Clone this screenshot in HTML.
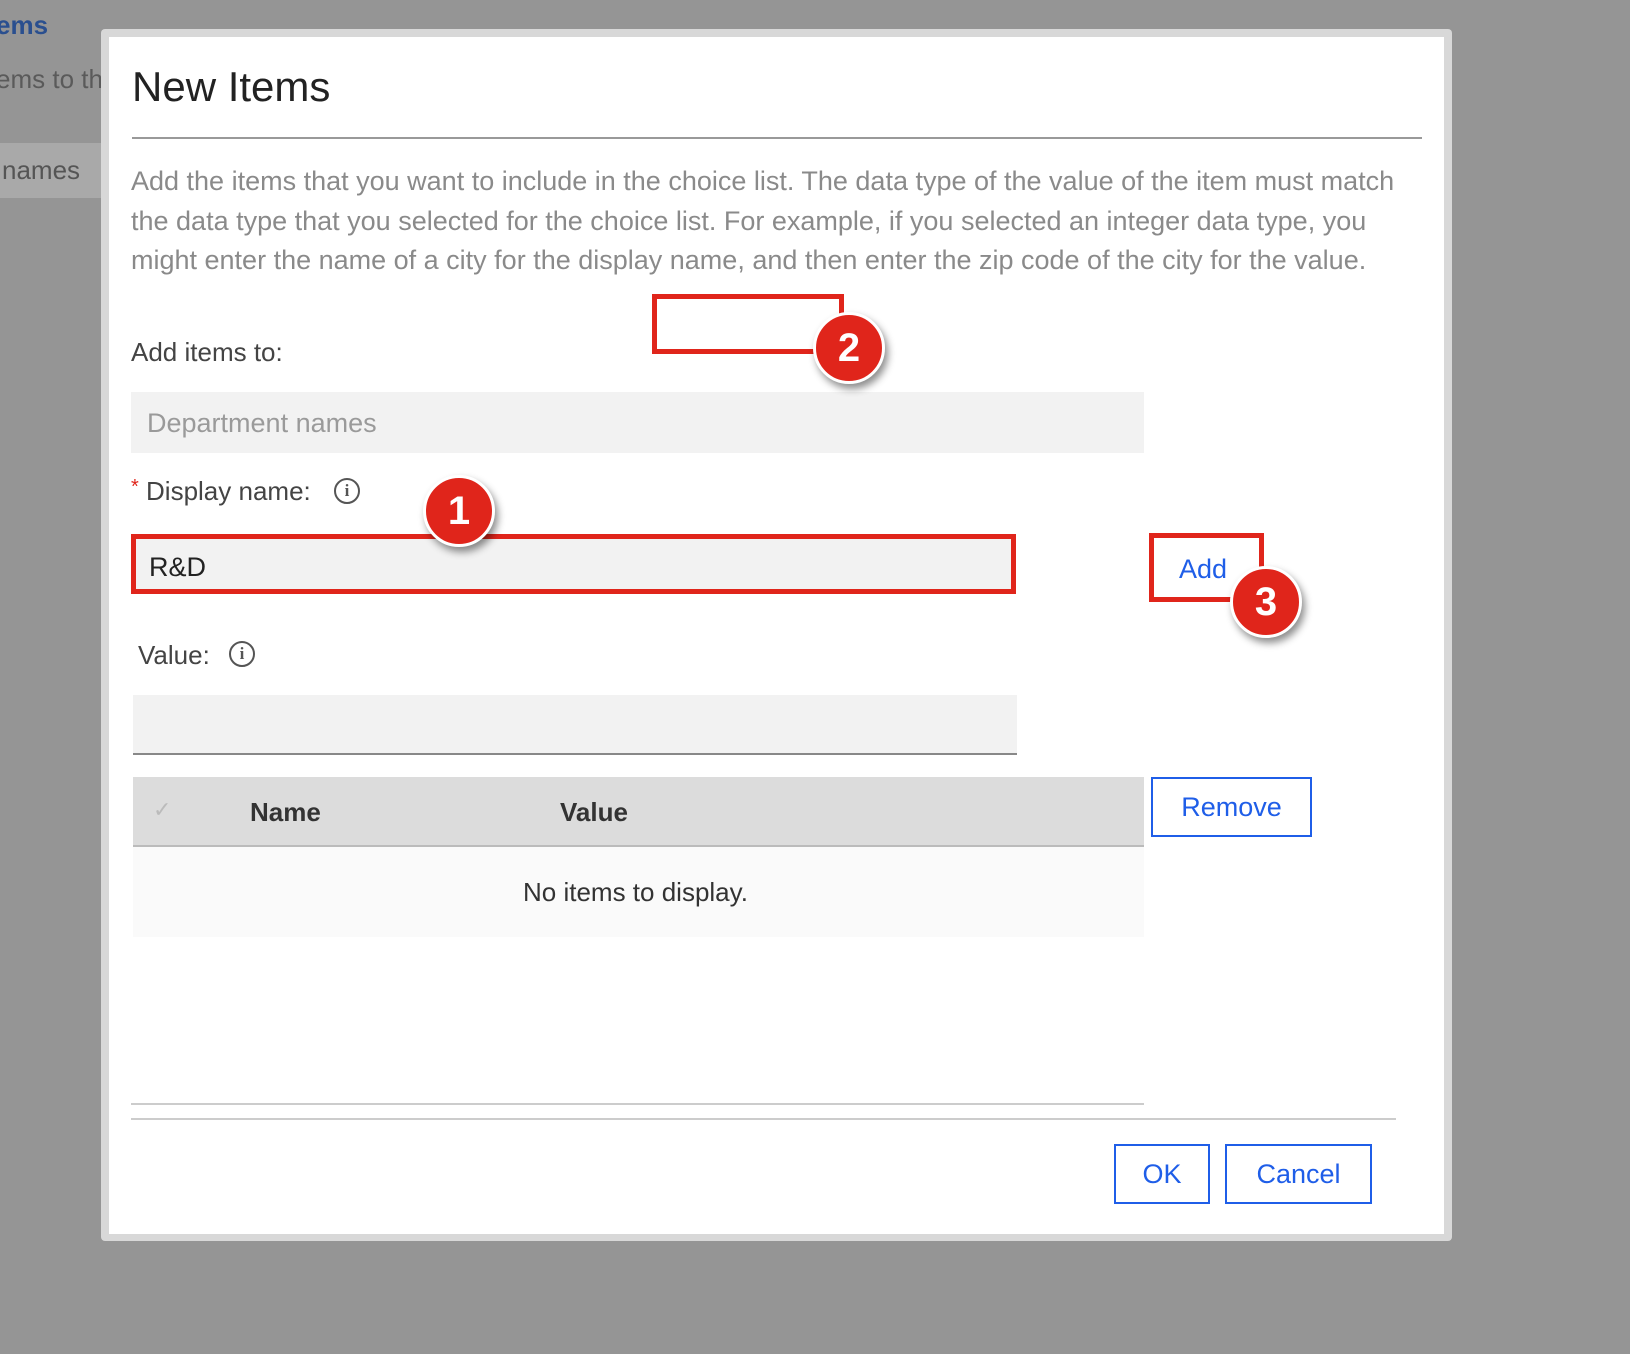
<!DOCTYPE html>
<html><head><meta charset="utf-8"><style>
body{margin:0;width:1630px;height:1354px;background:#959595;position:relative;overflow:hidden;font-family:"Liberation Sans",sans-serif}
.a{position:absolute}
.t{white-space:nowrap}
.info{position:absolute;width:26px;height:26px;border:2px solid #555;border-radius:50%;box-sizing:border-box;font:bold 17px "Liberation Serif",serif;color:#555;text-align:center;line-height:22px}
.circ{position:absolute;width:72px;height:72px;border-radius:50%;background:#e0251b;border:3px solid #fff;box-sizing:border-box;color:#fff;font:bold 40px "Liberation Sans",sans-serif;text-align:center;line-height:66px;box-shadow:3px 5px 8px rgba(0,0,0,.45)}
.btn{position:absolute;border:2px solid #1f5ee8;box-sizing:border-box;color:#1f5ee8;font-size:27px;text-align:center;background:#fff}
</style></head><body>
<div class="a t" style="left:-4px;top:10px;font-size:26px;font-weight:bold;color:#2a4f8f">ems</div>
<div class="a t" style="left:-4px;top:64px;font-size:26px;color:#5a5a5a">ems to th</div>
<div class="a" style="left:0;top:143px;width:101px;height:55px;background:#a9a9a9"></div>
<div class="a t" style="left:2px;top:155px;font-size:26px;color:#555">names</div>

<div class="a" style="left:101px;top:29px;width:1351px;height:1212px;background:#d8d8d8;border-radius:4px"></div>
<div class="a" style="left:109px;top:37px;width:1335px;height:1197px;background:#fff"></div>

<div class="a t" style="left:132px;top:63px;font-size:42px;color:#222">New Items</div>
<div class="a" style="left:132px;top:137px;width:1290px;height:2px;background:#999"></div>
<div class="a t" style="left:131px;top:162px;font-size:27px;line-height:39.5px;color:#8a8a8a;letter-spacing:0px">Add the items that you want to include in the choice list. The data type of the value of the item must match<br>the data type that you selected for the choice list. For example, if you selected an integer data type, you<br>might enter the name of a city for the display name, and then enter the zip code of the city for the value.</div>

<div class="a t" style="left:131px;top:337px;font-size:26px;color:#444">Add items to:</div>
<div class="a" style="left:131px;top:392px;width:1013px;height:61px;background:#f2f2f2"></div>
<div class="a t" style="left:147px;top:408px;font-size:27px;color:#9a9a9a">Department names</div>

<div class="a t" style="left:131px;top:476px;font-size:26px;color:#444"><span style="color:#e0251b;font-size:20px;vertical-align:top">*</span> Display name:</div>
<div class="info" style="left:334px;top:478px">i</div>

<div class="a" style="left:131px;top:534px;width:885px;height:60px;background:#f2f2f2;border:5px solid #e0251b;box-sizing:border-box"></div>
<div class="a t" style="left:149px;top:552px;font-size:27px;color:#222">R&amp;D</div>

<div class="a" style="left:652px;top:294px;width:192px;height:60px;border:5px solid #e0251b;box-sizing:border-box"></div>

<div class="a" style="left:1149px;top:533px;width:115px;height:69px;border:5px solid #e0251b;box-sizing:border-box;background:#fff"></div>
<div class="a t" style="left:1179px;top:554px;font-size:27px;color:#1f5ee8">Add</div>

<div class="a t" style="left:138px;top:640px;font-size:26px;color:#444">Value:</div>
<div class="info" style="left:229px;top:641px">i</div>
<div class="a" style="left:133px;top:695px;width:884px;height:60px;background:#f2f2f2;border-bottom:2px solid #888;box-sizing:border-box"></div>

<div class="a" style="left:133px;top:777px;width:1011px;height:70px;background:#dcdcdc;border-bottom:2px solid #bbb;box-sizing:border-box"></div>
<div class="a t" style="left:153px;top:797px;font-size:22px;color:#bbb">✓</div>
<div class="a t" style="left:250px;top:797px;font-size:26px;font-weight:bold;color:#333">Name</div>
<div class="a t" style="left:560px;top:797px;font-size:26px;font-weight:bold;color:#333">Value</div>
<div class="a" style="left:133px;top:847px;width:1011px;height:90px;background:#fafafa"></div>
<div class="a t" style="left:523px;top:877px;font-size:26px;color:#333">No items to display.</div>
<div class="btn" style="left:1151px;top:777px;width:161px;height:60px;line-height:56px">Remove</div>

<div class="a" style="left:131px;top:1103px;width:1013px;height:2px;background:#ccc"></div>
<div class="a" style="left:131px;top:1118px;width:1265px;height:2px;background:#ccc"></div>
<div class="btn" style="left:1114px;top:1144px;width:96px;height:60px;line-height:56px">OK</div>
<div class="btn" style="left:1225px;top:1144px;width:147px;height:60px;line-height:56px">Cancel</div>

<div class="circ" style="left:423px;top:475px">1</div>
<div class="circ" style="left:813px;top:312px">2</div>
<div class="circ" style="left:1230px;top:566px">3</div>
</body></html>
